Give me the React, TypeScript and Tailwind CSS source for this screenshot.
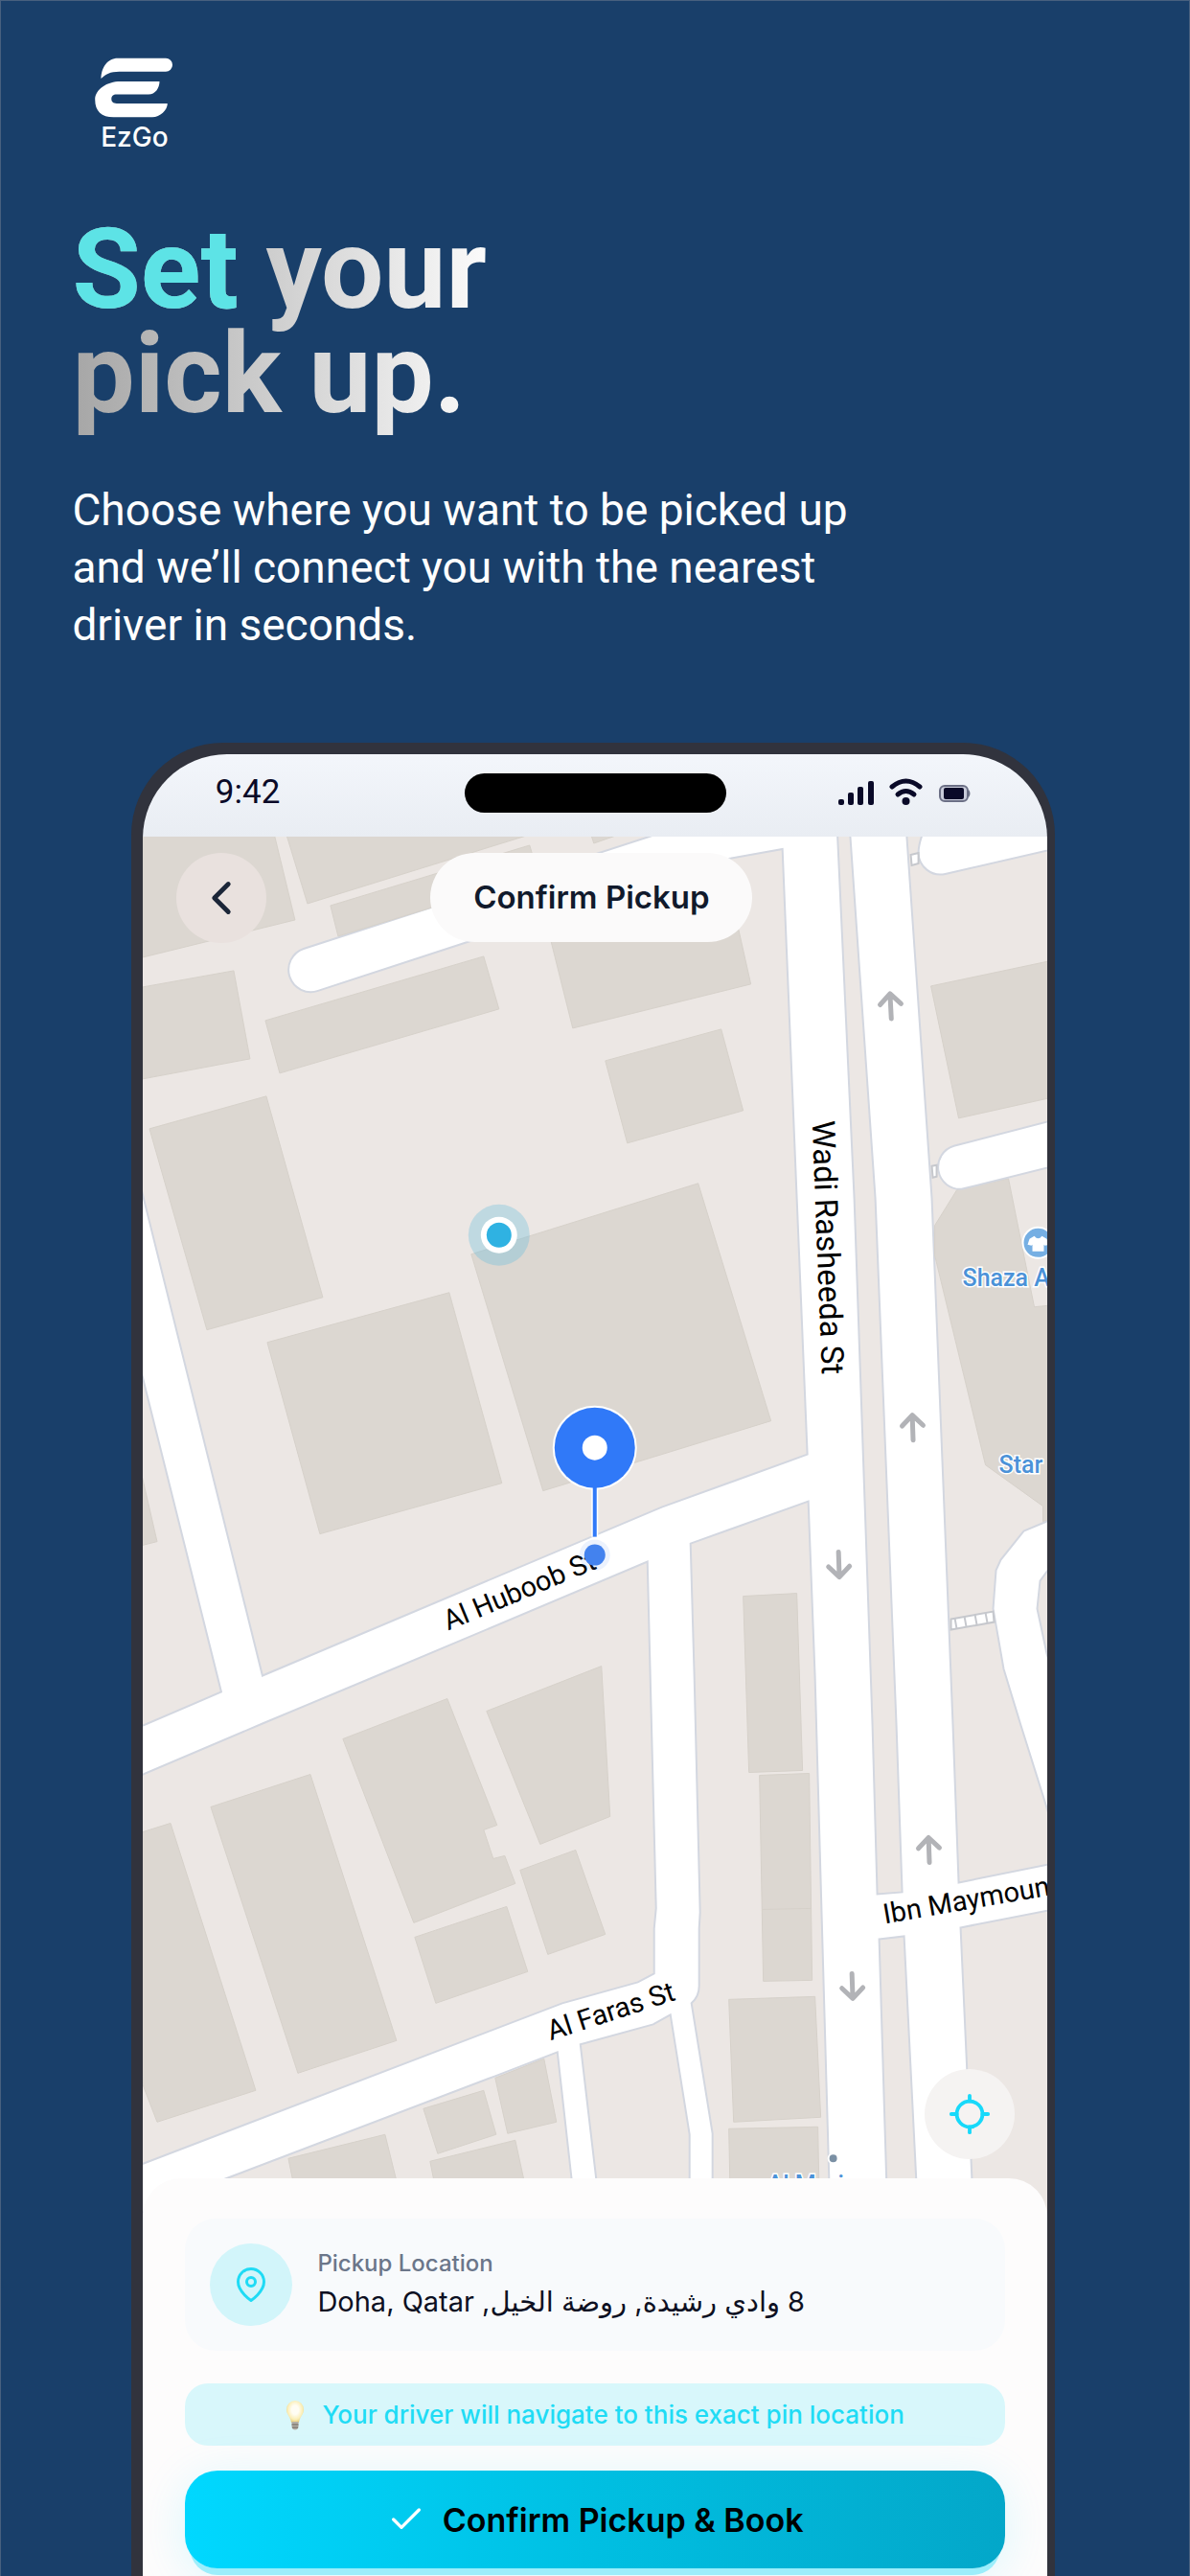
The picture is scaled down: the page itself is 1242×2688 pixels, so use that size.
import type { ReactNode } from "react";
import { Locate } from "lucide-react";
import { FiCheck, FiChevronLeft, FiMapPin } from "react-icons/fi";

// ─── Map data ─────────────────────────────────────────────────────────────────
// The map is white (roads) with land blocks on top of it, then buildings.
// All coordinates share the viewBox of PickupMap.

const LAND = [
  "M140,860 H715 L317,989 A23,23 0 0 0 332,1033 L488,982 L761,895 L817,885 L832,1250 L843,1517 L691,1572 L274,1748 L149,1246 L140,1210Z",
  "M140,1400 L151,1445 L231,1765 L140,1804Z",
  "M140,1855 L274,1798 L389,1750 L676,1629 L679,1750 L685,1991 L683,2012 V2059 L666,2068 L587,2090 L140,2261Z",
  "M721,1610 L844,1566 L851,1750 L867,2320 H744 V2226 L722,2090 Q730,2083 730,2072 V2012 L731,1995 L725,1750Z",
  "M700,2102 L720,2227 V2320 H628 L606,2133 L682,2112Z",
  "M582,2141 L602,2320 H120 L236,2273 L517,2166Z",
  "M874,860 H887 L914,1250 L936,1800 L942,1974 L916,1976 L911,1800 L892,1250Z",
  "M918,2023 L944,2020 L959,2320 H927Z",
  "M946,860 L973,1250 L995,1800 L1001,1964 L1100,1944 V860Z",
  "M1003,2011 L1100,1992 V2320 H1017Z",
];

const BUILDINGS = [
  "149,860 284,860 308,959 149,998",
  "296,860 585,860 321,942",
  "345,944 553,881 562,912 353,976",
  "614,860 620,879 660,865",
  "149,1029 244,1012 261,1104 149,1125",
  "277,1064 505,997 521,1052 292,1119",
  "573,972 768,955 784,1026 598,1072",
  "632,1106 753,1073 776,1158 655,1192",
  "156,1177 278,1143 337,1353 216,1387",
  "279,1400 469,1348 524,1547 334,1600",
  "492,1308 729,1234 805,1482 567,1555",
  "140,1504 164,1608 140,1614",
  "140,1914 178,1902 267,2181 164,2214 149,2175",
  "220,1885 324,1851 414,2129 311,2163",
  "358,1814 467,1772 519,1904 505,1909 515,1939 527,1936 538,1965 432,2006",
  "508,1785 628,1738 637,1895 564,1924",
  "543,1951 601,1930 632,2018 572,2039",
  "433,2021 529,1989 551,2057 455,2090",
  "442,2200 505,2181 518,2227 457,2247",
  "517,2168 568,2148 581,2214 530,2226",
  "301,2252 402,2227 425,2320 315,2320",
  "449,2255 538,2233 557,2320 462,2320",
  "776,1665 832,1662 838,1847 782,1849",
  "793,1852 845,1850 848,2066 797,2067",
  "761,2086 851,2083 857,2209 766,2214",
  "761,2221 854,2219 856,2320 763,2320",
  "972,1028 1100,1001 1100,1144 1001,1166",
  "999,1241 1053,1229 1080,1363 1100,1361 1100,1584 1089,1587 1089,1571 1029,1528 976,1309 976,1278",
];

// Roads that cut into the east block
const EAST_ROADS = [
  "M1100,885 L987,911 A23,23 0 0 1 959,889 Q959,878 967,860 H1100Z",
  "M1100,1168 L996,1195 A23,23 0 0 0 1004,1240 L1100,1216Z",
  "M1100,1584 L1069,1597 L1045,1627 L1040,1638 L1037,1678 L1048,1741 L1066,1800 L1100,1908Z",
];

const ARROWS = [
  { x: 930, y: 1049, angle: -3 },
  { x: 953, y: 1489, angle: -2 },
  { x: 970, y: 1930, angle: -2 },
  { x: 876, y: 1632, angle: 178 },
  { x: 890, y: 2072, angle: 178 },
];

const STREETS = [
  { name: "Al Huboob St", x: 468, y: 1701, angle: -22.7 },
  { name: "Al Faras St", x: 575, y: 2129, angle: -18 },
  { name: "Ibn Maymoun", x: 924, y: 2007, angle: -9.8 },
];

const PLACES = [
  { name: "Shaza A", x: 1005, y: 1341 },
  { name: "Star", x: 1043, y: 1536 },
  { name: "Al M", x: 801, y: 2288 },
  { name: "i", x: 875, y: 2288 },
];

// ─── PickupMap ────────────────────────────────────────────────────────────────
function PickupMap() {
  return (
    <svg
      viewBox="149 872 944 1441"
      preserveAspectRatio="xMidYMin slice"
      className="block size-full bg-white"
      role="img"
      aria-label="Map"
    >
      <g fill="#ece7e4" stroke="#d3d7e0" strokeWidth="2">
        {LAND.map((d) => (
          <path key={d} d={d} />
        ))}
      </g>
      <g fill="#dcd7d1" stroke="#d6d1ca" strokeWidth="1">
        {BUILDINGS.map((points) => (
          <polygon key={points} points={points} />
        ))}
        <path d="M796,1992 L847,1991" />
      </g>
      <g fill="#fff" stroke="#d3d7e0" strokeWidth="2">
        {EAST_ROADS.map((d) => (
          <path key={d} d={d} />
        ))}
        <path fill="#ece7e4" d="M1100,1630 L1086,1649 L1083,1678 L1093,1725 L1100,1750Z" />
      </g>

      {/* Footbridges */}
      <g fill="#fff" stroke="#c6c8cd" strokeWidth="2">
        <path d="M951,891 L959,889 V900 L952,902Z" />
        <path d="M973,1216 L978,1215 V1227 L974,1228Z" />
        <path d="M993,1689 L1037,1681 L1038,1692 L993,1700Z" />
        <path d="M997,1688 l2,11 M1007,1686 l2,11 M1018,1684 l2,11 M1029,1682 l2,11" />
      </g>

      {/* Driving directions */}
      <g fill="none" stroke="#b2b3b7" strokeWidth="5" strokeLinecap="round" strokeLinejoin="round">
        {ARROWS.map(({ x, y, angle }) => (
          <path
            key={`${x}-${y}`}
            d="M0,13 V-12 M-11,-2 L0,-13 L11,-2"
            transform={`translate(${x} ${y}) rotate(${angle})`}
          />
        ))}
      </g>

      <g className="fill-black font-[Roboto,sans-serif] text-[29px]">
        {STREETS.map(({ name, x, y, angle }) => (
          <text key={name} transform={`translate(${x} ${y}) rotate(${angle})`}>
            {name}
          </text>
        ))}
        <text className="text-[33px]" transform="translate(848 1169) rotate(87.8)">
          Wadi Rasheeda St
        </text>
      </g>

      {/* Points of interest */}
      <circle cx="1084" cy="1296" r="16" fill="#76afe3" stroke="#fff" strokeWidth="2" />
      <path
        d="M1080,1289 q4,5 8,0 l5,3 2,6 -4,1 -1,-1 v7 h-12 v-7 l-1,1 -4,-1 2,-6Z"
        fill="#fff"
      />
      <circle cx="870" cy="2252" r="5" fill="#7b90a4" stroke="#fff" strokeWidth="2" />
      <g
        className="fill-[#4b92d8] font-[Roboto,sans-serif] text-[25px] font-medium"
        stroke="#fff"
        strokeWidth="3"
        paintOrder="stroke"
      >
        {PLACES.map(({ name, x, y }) => (
          <text key={name} x={x} y={y}>
            {name}
          </text>
        ))}
      </g>

      {/* Current position */}
      <circle cx="521" cy="1288" r="32" fill="#5fbcdc" fillOpacity="0.32" />
      <circle cx="521" cy="1288" r="19" fill="#fff" />
      <circle cx="521" cy="1288" r="13" fill="#2fb2e2" />

      {/* Pickup pin */}
      <circle cx="621" cy="1622" r="16" fill="#4382ee" fillOpacity="0.1" />
      <circle cx="621" cy="1622" r="11" fill="#4382ee" />
      <path d="M621,1545 V1603" stroke="#fff" strokeWidth="7" />
      <circle cx="621" cy="1510" r="44" fill="#fff" />
      <path d="M621,1545 V1603" stroke="#3079f8" strokeWidth="4" />
      <circle cx="621" cy="1510" r="42" fill="#3079f8" />
      <circle cx="621" cy="1510" r="13" fill="#fff" />
    </svg>
  );
}

// ─── Logo ─────────────────────────────────────────────────────────────────────
function Logo() {
  return (
    <div className="ml-6 flex w-fit flex-col items-center text-white">
      <svg viewBox="99 60 82 63" className="w-[82px]" fill="currentColor" aria-hidden="true">
        <path d="M105.5,82 C105.5,71 112,60.7 123,60.7 H173 A7,7 0 0 1 173,74.7 H124.5 C115,74.7 110,77.5 105.5,82Z" />
        <path d="M166.5,85 H125.5 C112,85 99.2,93 99.2,104 C99.2,116 106,122.3 118.5,122.3 H159 C167,122.3 174.8,115 174.8,108 H121.8 C118,108 116.3,106 116.3,103.3 C116.3,100.5 118,98.5 121.8,98.5 H155 C162,98.5 166.5,92 166.5,85Z" />
      </svg>
      <span className="mt-1 font-[Inter,sans-serif] text-[28px] leading-8 font-medium">EzGo</span>
    </div>
  );
}

// ─── StatusBar ────────────────────────────────────────────────────────────────
function StatusBar() {
  return (
    <div className="grid h-[86px] grid-cols-[1fr_auto_1fr] items-center bg-linear-to-b from-[#f3f6fb] to-[#e9edf3] px-[8%] pb-1.5 text-[#0a0a28]">
      <span className="font-[Roboto,sans-serif] text-[35px] leading-10">9:42</span>
      <div className="h-[41px] w-[273px] rounded-full bg-black" />
      <svg viewBox="872 811 140 32" className="mr-1 w-[140px] justify-self-end" fill="currentColor" aria-hidden="true">
        <rect x="874" y="834" width="6" height="6" rx="2" />
        <rect x="884" y="827" width="6" height="13" rx="2" />
        <rect x="894" y="821" width="6" height="19" rx="2" />
        <rect x="905" y="815" width="6" height="25" rx="2" />
        <g fill="none" stroke="currentColor" strokeWidth="5" strokeLinecap="round">
          <path d="M930,821 Q944.5,809 959,821" />
          <path d="M936,829 Q944.5,822 953,829" />
        </g>
        <circle cx="944.5" cy="836" r="4" />
        <rect x="980" y="820" width="29" height="16" rx="5" fill="#c9ccda" stroke="#6b6f85" strokeWidth="2" />
        <rect x="984" y="822" width="21" height="12" rx="2" />
        <path d="M1010,824 q3,4 0,8Z" fill="#6b6f85" />
      </svg>
    </div>
  );
}

// ─── BulbIcon ─────────────────────────────────────────────────────────────────
function BulbIcon() {
  return (
    <svg viewBox="0 0 20 32" className="h-8 w-5" aria-hidden="true">
      <defs>
        <radialGradient id="bulb" cx="0.5" cy="0.42" r="0.58">
          <stop offset="0.35" stopColor="#fffdf4" />
          <stop offset="0.75" stopColor="#fbeeb6" />
          <stop offset="1" stopColor="#e6cb78" />
        </radialGradient>
      </defs>
      <path d="M10,1 A9,9.5 0 0 1 19,10.5 C19,16 14.500,18 14,24 H6 C5.500,18 1,16 1,10.500 A9,9.500 0 0 1 10,1Z" fill="url(#bulb)" />
      <path d="M6.5,23 h7 v6 q-1,2.5 -3.5,2.5 t-3.5,-2.5Z" fill="#b3aea6" />
      <path d="M6.5,26 h7 M7,29 h6" stroke="#6a645d" strokeWidth="1" />
    </svg>
  );
}

function RoundButton({ label, className, children }: { label: string; className: string; children: ReactNode }) {
  return (
    <button
      type="button"
      aria-label={label}
      className={`absolute flex size-[94px] items-center justify-center rounded-full ${className}`}
    >
      {children}
    </button>
  );
}

// ─── PickupSheet ──────────────────────────────────────────────────────────────
function PickupSheet() {
  return (
    <section className="relative -mt-10 grow rounded-t-[40px] bg-[#fdfcfc] px-11 pt-[42px] pb-[7px]">
      <div className="flex items-center gap-[26px] rounded-[32px] bg-[#f8fafc] p-[26px]">
        <div className="flex size-[86px] shrink-0 items-center justify-center rounded-full bg-[#d2f5fa] text-[#1fdbf5]">
          <FiMapPin size={36} />
        </div>
        <div>
          <p className="text-[24px] leading-8 font-medium text-[#6b768a]">Pickup Location</p>
          <p dir="rtl" className="mt-1 text-[29px] leading-10 text-[#0d1022]">
            8 وادي رشيدة, روضة الخيل, Doha, Qatar
          </p>
        </div>
      </div>

      <p className="mt-[34px] flex h-[65px] items-center justify-center gap-[18px] rounded-[24px] bg-[#d8f7fb] text-[26px] font-medium text-[#1fdcf5]">
        <BulbIcon />
        Your driver will navigate to this exact pin location
      </p>

      <button
        type="button"
        className="mt-[26px] flex h-[102px] w-full items-center justify-center gap-[18px] rounded-[34px] bg-linear-to-r from-[#00d8ff] via-[#00bfe2] to-[#03a7c9] text-[34px] font-semibold text-black shadow-[0_12px_0_-5px_#9ceefb,0_8px_50px_rgba(0,216,255,0.14)]"
      >
        <FiCheck size={40} className="text-white" />
        Confirm Pickup &amp; Book
      </button>
    </section>
  );
}

// ─── Page ─────────────────────────────────────────────────────────────────────
export default function App() {
  return (
    <main className="flex min-h-screen flex-col overflow-hidden border-x border-t border-[#48607f] bg-[#193f6a]">
      <header className="px-[6%] pt-[59px] font-[Roboto,sans-serif]">
        <Logo />
        <h1 className="mt-[68px] w-fit bg-linear-to-r from-[#a6a6a6] to-[#fbfbfb] bg-clip-text pb-4 text-[116px] leading-[109px] font-bold text-transparent">
          <span className="text-[#5de3e6]">Set</span> your
          <br />
          pick up.
        </h1>
        <p className="mt-[41px] max-w-[880px] text-[46px] leading-[60px] text-white">
          Choose where you want to be picked up and we’ll connect you with the nearest driver in seconds.
        </p>
      </header>

      {/* Phone */}
      <div className="mt-[93px] mr-[11.3%] ml-[11%] flex grow flex-col rounded-t-[96px] border-t-[12px] border-r-[8px] border-l-[12px] border-[#31333d] bg-[#31333d]">
        <div className="flex grow flex-col overflow-hidden rounded-t-[88px] font-[Inter,'DejaVu_Sans',sans-serif]">
          <StatusBar />
          <div className="relative aspect-[944/1441]">
            <PickupMap />
            <RoundButton label="Back" className="top-[17px] left-[35px] bg-[#e9e1de] text-[#1b2638]">
              <FiChevronLeft size={58} strokeWidth={2} />
            </RoundButton>
            <h2 className="absolute top-[17px] left-[300px] flex h-[93px] w-[336px] items-center justify-center rounded-full bg-[#fbfafa] text-[33px] font-semibold text-[#111a2c]">
              Confirm Pickup
            </h2>
            <RoundButton label="My location" className="right-[34px] bottom-[60px] bg-[#f5f3f2] text-[#17d9fa]">
              <Locate size={46} strokeWidth={2} />
            </RoundButton>
          </div>
          <PickupSheet />
        </div>
      </div>
    </main>
  );
}
